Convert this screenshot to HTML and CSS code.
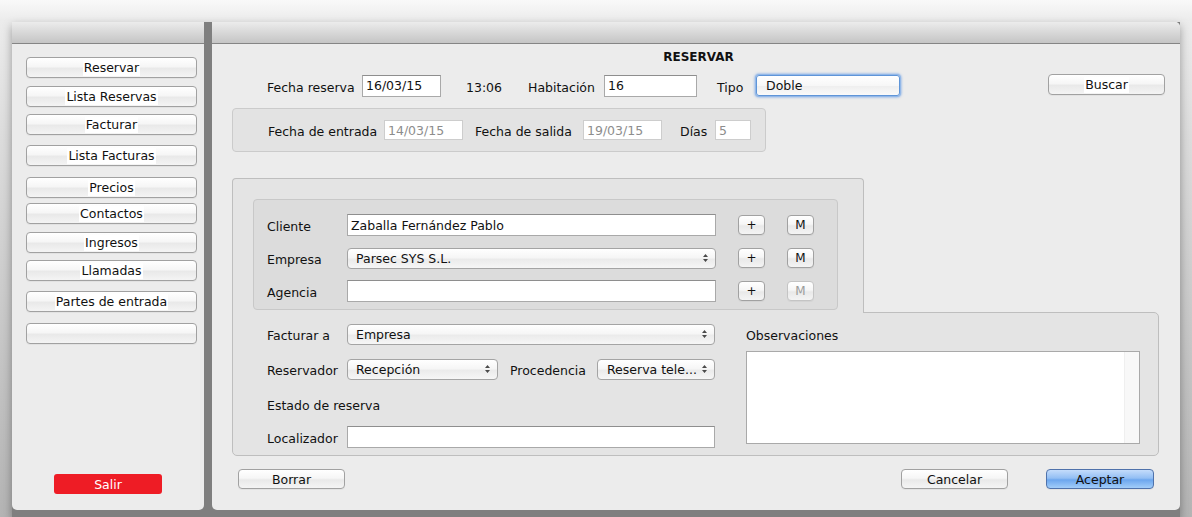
FILE: index.html
```html
<!DOCTYPE html>
<html lang="es">
<head>
<meta charset="utf-8">
<title>Reservar</title>
<link rel="stylesheet" href="styles.css">
</head>
<body>
<div class="desk">
  <aside class="panel side">
    <div class="titlebar"></div>
    <nav class="side-body">
      <button class="btn nav"><span>Reservar</span></button>
      <button class="btn nav"><span>Lista Reservas</span></button>
      <button class="btn nav"><span>Facturar</span></button>
      <button class="btn nav"><span>Lista Facturas</span></button>
      <button class="btn nav"><span>Precios</span></button>
      <button class="btn nav"><span>Contactos</span></button>
      <button class="btn nav"><span>Ingresos</span></button>
      <button class="btn nav"><span>Llamadas</span></button>
      <button class="btn nav"><span>Partes de entrada</span></button>
      <button class="btn nav"></button>
      <button class="salir">Salir</button>
    </nav>
  </aside>
  <main class="panel win">
    <div class="titlebar"></div>
    <div class="win-body">
      <h1 class="title">RESERVAR</h1>
      <div class="row top-row">
        <span class="lbl w-fr">Fecha reserva</span>
        <div class="field w-date">16/03/15</div>
        <span class="lbl time">13:06</span>
        <span class="lbl w-hab">Habitación</span>
        <div class="field w-hab-f">16</div>
        <span class="lbl tipo">Tipo</span>
        <div class="field focus">Doble</div>
        <button class="btn buscar"><span>Buscar</span></button>
      </div>
      <div class="group dates">
        <span class="lbl w-fe">Fecha de entrada</span>
        <div class="field dis w-date">14/03/15</div>
        <span class="lbl w-fs">Fecha de salida</span>
        <div class="field dis w-date">19/03/15</div>
        <span class="lbl w-dias">Días</span>
        <div class="field dis w-d">5</div>
      </div>
      <div class="tabview">
        <div class="tab-top">
          <div class="inner">
            <div class="row irow">
              <span class="lbl w-80">Cliente</span>
              <div class="field w-wide">Zaballa Fernández Pablo</div>
              <button class="btn sq">+</button>
              <button class="btn sq">M</button>
            </div>
            <div class="row irow">
              <span class="lbl w-80">Empresa</span>
              <div class="popup w-wide"><span>Parsec SYS S.L.</span><svg class="arr" width="7" height="10" viewBox="0 0 7 10"><path d="M3.5 1L6 4H1Z M1 6H6L3.5 9Z" fill="#4a4a4a"/></svg></div>
              <button class="btn sq">+</button>
              <button class="btn sq">M</button>
            </div>
            <div class="row irow">
              <span class="lbl w-80">Agencia</span>
              <div class="field w-wide"></div>
              <button class="btn sq">+</button>
              <button class="btn sq off">M</button>
            </div>
          </div>
        </div>
        <div class="tab-bottom">
          <div class="col-left">
            <div class="row brow">
              <span class="lbl w-80">Facturar a</span>
              <div class="popup w-full"><span>Empresa</span><svg class="arr" width="7" height="10" viewBox="0 0 7 10"><path d="M3.5 1L6 4H1Z M1 6H6L3.5 9Z" fill="#4a4a4a"/></svg></div>
            </div>
            <div class="row brow">
              <span class="lbl w-80">Reservador</span>
              <div class="popup w-rec"><span>Recepción</span><svg class="arr" width="7" height="10" viewBox="0 0 7 10"><path d="M3.5 1L6 4H1Z M1 6H6L3.5 9Z" fill="#4a4a4a"/></svg></div>
              <span class="lbl w-proc">Procedencia</span>
              <div class="popup w-pro"><span>Reserva tele...</span><svg class="arr" width="7" height="10" viewBox="0 0 7 10"><path d="M3.5 1L6 4H1Z M1 6H6L3.5 9Z" fill="#4a4a4a"/></svg></div>
            </div>
            <div class="row brow">
              <span class="lbl">Estado de reserva</span>
            </div>
            <div class="row brow loc">
              <span class="lbl w-80">Localizador</span>
              <div class="field w-full"></div>
            </div>
          </div>
          <div class="col-right">
            <span class="lbl obs">Observaciones</span>
            <div class="textarea"><div class="scroll"></div></div>
          </div>
        </div>
      </div>
      <div class="footer">
        <button class="btn foot borrar">Borrar</button>
        <button class="btn foot cancelar">Cancelar</button>
        <button class="btn foot aceptar">Aceptar</button>
      </div>
    </div>
  </main>
</div>
</body>
</html>
```
FILE: styles.css
```css
* { box-sizing: border-box; }
html, body { margin: 0; height: 100%; }
body {
  font-family: "DejaVu Sans", "Liberation Sans", sans-serif;
  font-size: 12.5px;
  color: #111;
  overflow: hidden;
  background: linear-gradient(to bottom, #f9f9f9 0, #ececec 20px, #dcdcdc 140px, #b4b4b4 517px);
}
.desk {
  display: flex;
  align-items: flex-start;
  gap: 8px;
  margin: 22px 12px 0;
  height: 495px;
  background: #7f7f7f;
  box-shadow: 0 4px 9px rgba(0,0,0,.35);
}
.panel {
  background: #ececec;
  height: 488px;
  display: flex;
  flex-direction: column;
  overflow: hidden;
}
.side { width: 192px; flex: none; border-radius: 0 0 5px 5px; }
.win { flex: 1; border-radius: 0 5px 5px 5px; }
.titlebar {
  height: 22px;
  flex: none;
  background: linear-gradient(#ececec, #d6d6d6 55%, #c5c5c5);
  border-bottom: 1px solid #858585;
}

/* generic controls */
.btn {
  font: inherit;
  color: #111;
  padding: 0;
  display: flex;
  align-items: center;
  justify-content: center;
  background: linear-gradient(#ffffff, #f6f6f6 45%, #e9e9e9 55%, #f4f4f4);
  border: 1px solid #a1a1a1;
  border-radius: 4px;
  box-shadow: 0 1px 0 rgba(0,0,0,.04);
}
.btn span { background: #fff; padding: 0 1px; line-height: 16px; }
.lbl { white-space: nowrap; flex: none; padding-top: 3px; }
.field {
  height: 22px;
  flex: none;
  background: #fff;
  border: 1px solid #a9a9a9;
  border-top-color: #8e8e8e;
  padding: 0 3px;
  display: flex;
  align-items: center;
  white-space: nowrap;
}
.field.dis { height: 20px; border-color: #cdcdcd; color: #8d8d8d; }
.popup {
  height: 21px;
  flex: none;
  display: flex;
  align-items: center;
  justify-content: space-between;
  padding: 0 6px 0 8px;
  background: linear-gradient(#ffffff, #f6f6f6 45%, #ebebeb 55%, #f6f6f6);
  border: 1px solid #a4a4a4;
  border-radius: 4px;
  white-space: nowrap;
}
.arr { flex: none; }
.row { display: flex; align-items: center; }

/* side panel */
.side-body {
  flex: 1;
  display: flex;
  flex-direction: column;
  align-items: flex-start;
  padding: 13px 0 16px 14px;
}
.nav { width: 171px; height: 21px; flex: none; }
.nav:nth-child(2) { margin-top: 8px; }
.nav:nth-child(3) { margin-top: 7px; }
.nav:nth-child(4) { margin-top: 10px; }
.nav:nth-child(5) { margin-top: 11px; }
.nav:nth-child(6) { margin-top: 5px; }
.nav:nth-child(7) { margin-top: 8px; }
.nav:nth-child(8) { margin-top: 7px; }
.nav:nth-child(9) { margin-top: 10px; }
.nav:nth-child(10) { margin-top: 11px; }
.salir {
  margin-top: auto;
  align-self: center;
  margin-left: -14px;
  width: 108px;
  height: 20px;
  font: inherit;
  color: #fff;
  background: #ee1c25;
  border: none;
  border-radius: 3px;
}

/* main window */
.win-body { flex: 1; display: flex; flex-direction: column; padding: 0 15px 0 20px; }
.title {
  margin: 6px 0 0;
  font-size: 12px;
  line-height: 14px;
  font-weight: bold;
  text-align: center;
  color: #111;
}
.top-row { margin-top: 10px; height: 23px; padding-left: 35px; }
.w-fr { width: 95px; }
.w-date { width: 79px; }
.time { margin-left: 25px; width: 62px; }
.w-hab { width: 76px; }
.w-hab-f { width: 93px; }
.tipo { margin-left: 20px; width: 39px; }
.focus {
  width: 144px;
  height: 21px;
  padding-left: 9px;
  border: 1px solid #5f95d8;
  border-radius: 3px;
  background: linear-gradient(#ffffff, #f7f7f7 50%, #efefef 55%, #fafafa);
  box-shadow: 0 0 0 1px #93b8e8, 0 0 2px 2px rgba(125,170,230,.55);
}
.buscar { margin-left: auto; width: 117px; height: 21px; margin-top: -2px; }

.group.dates {
  margin-top: 11px;
  width: 534px;
  height: 44px;
  display: flex;
  align-items: center;
  padding-left: 35px;
  background: #e3e3e3;
  border: 1px solid #cbcbcb;
  border-radius: 4px;
}
.w-fe { width: 116px; }
.w-fs { margin-left: 12px; width: 108px; }
.w-dias { margin-left: 18px; width: 35px; }
.w-d { width: 36px; }

.tabview { margin-top: 26px; display: flex; flex-direction: column; }
.tab-top {
  position: relative;
  z-index: 1;
  width: 632px;
  height: 135px;
  margin-bottom: -1px;
  padding: 20px 0 0 20px;
  background: #e4e4e4;
  border: 1px solid #bebebe;
  border-bottom: none;
  border-radius: 4px 4px 0 0;
}
.inner {
  width: 585px;
  height: 111px;
  padding: 14px 0 0 13px;
  background: #dcdcdc;
  border: 1px solid #c8c8c8;
  border-radius: 4px;
  display: flex;
  flex-direction: column;
  gap: 11px;
}
.irow { height: 22px; }
.w-80 { width: 80px; }
.w-wide { width: 369px; }
.sq { width: 27px; height: 20px; margin-left: 22px; flex: none; font-size: 12px; }
.sq.off { color: #9b9b9b; border-color: #c4c4c4; }

.tab-bottom {
  width: 927px;
  height: 144px;
  display: flex;
  padding: 11px 0 0 34px;
  background: #e4e4e4;
  border: 1px solid #bebebe;
  border-radius: 0 5px 5px 5px;
}
.col-left { width: 448px; display: flex; flex-direction: column; }
.brow { height: 20px; }
.brow + .brow { margin-top: 15px; }
.brow.loc { height: 22px; margin-top: 12px; }
.w-full { width: 368px; }
.w-rec { width: 151px; }
.w-proc { margin-left: 12px; width: 87px; }
.w-pro { width: 118px; padding-left: 9px; }
.col-right { margin-left: 31px; display: flex; flex-direction: column; }
.obs { line-height: 20px; padding-top: 2px; }
.textarea {
  margin-top: 5px;
  width: 394px;
  height: 93px;
  background: #fff;
  border: 1px solid #a9a9a9;
  display: flex;
  justify-content: flex-end;
}
.scroll { width: 15px; background: #f8f8f8; border-left: 1px solid #efefef; }

.footer { margin-top: 13px; display: flex; align-items: center; padding-left: 6px; padding-right: 11px; }
.foot { width: 107px; height: 20px; }
.cancelar { margin-left: auto; }
.aceptar {
  margin-left: 38px;
  width: 108px;
  border-color: #4f72ab;
  background: linear-gradient(#c4dcfb, #93bff4 45%, #6ca6ee 55%, #a2cdf9);
}
```
